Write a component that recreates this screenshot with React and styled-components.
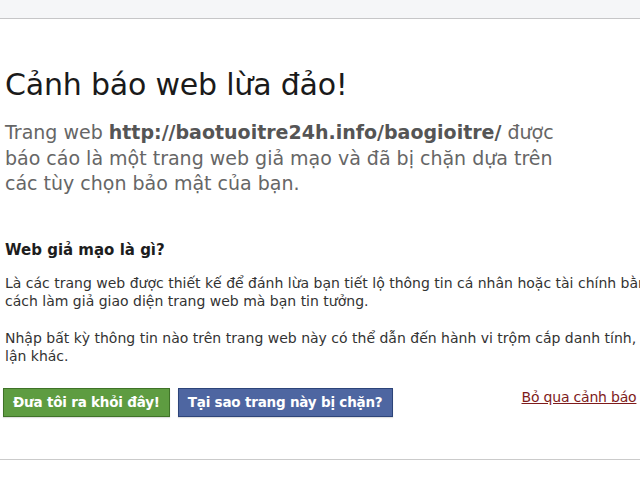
import React from 'react';
import styled, { createGlobalStyle } from 'styled-components';

const GlobalStyle = createGlobalStyle`
  html, body {
    margin: 0;
    padding: 0;
    background: #fff;
    overflow: hidden;
  }
  body {
    width: 640px;
    height: 480px;
    font-family: "DejaVu Sans", "Liberation Sans", sans-serif;
  }
`;

const Page = styled.div`
  width: 640px;
  height: 480px;
  overflow: hidden;
  display: flex;
  flex-flow: column nowrap;
`;

const TopBar = styled.div`
  height: 18px;
  flex-shrink: 0;
  background: #f5f6f8;
  border-bottom: 1px solid #c6c6c8;
`;

const Content = styled.div`
  width: 670px;
  flex-shrink: 0;
  padding: 48px 0 42px 5px;
  border-bottom: 1px solid #cbcbcb;
`;

const Title = styled.h1`
  margin: 0;
  font-weight: normal;
  font-size: 30px;
  line-height: 36px;
  color: #1a1a1a;
  letter-spacing: -0.2px;
`;

const Lead = styled.p`
  margin: 17px 0 0;
  width: 560px;
  font-size: 19px;
  line-height: 25.5px;
  color: #666;

  b {
    color: #555;
  }
`;

const Heading = styled.h2`
  margin: 43px 0 0;
  font-size: 15px;
  line-height: 20px;
  color: #1d1d1d;
`;

const Text = styled.p`
  margin: ${p => p.$first ? '14px' : '19px'} 0 0;
  font-size: 14px;
  line-height: 18px;
  color: #333;
`;

const Actions = styled.div`
  margin-top: 23px;
  display: flex;
  align-items: flex-start;
  gap: 8px;
  margin-left: -2px;
`;

const Button = styled.button`
  height: 29px;
  padding: 0 9px;
  border: 1px solid ${p => p.$border};
  background: ${p => p.$bg};
  color: #fff;
  font-family: "DejaVu Sans", "Liberation Sans", sans-serif;
  font-weight: bold;
  font-size: 13.5px;
  letter-spacing: -0.2px;
  box-shadow: 0 1px 1px rgba(0, 0, 0, 0.12);
  cursor: pointer;
`;

const SkipLink = styled.a`
  margin-left: 121px;
  margin-top: 1px;
  font-size: 14px;
  color: #7e1b1b;
  text-decoration: underline;
  white-space: nowrap;
  letter-spacing: -0.2px;
`;

const App = () => {
  return (
    <Page>
      <GlobalStyle />
      <TopBar />
      <Content>
        <Title>Cảnh báo web lừa đảo!</Title>
        <Lead>
          Trang web <b>http://baotuoitre24h.info/baogioitre/</b> được báo cáo là một trang web giả mạo và đã bị chặn dựa trên các tùy chọn bảo mật của bạn.
        </Lead>
        <Heading>Web giả mạo là gì?</Heading>
        <Text $first>
          Là các trang web được thiết kế để đánh lừa bạn tiết lộ thông tin cá nhân hoặc tài chính bằng cách làm giả giao diện trang web mà bạn tin tưởng.
        </Text>
        <Text>
          Nhập bất kỳ thông tin nào trên trang web này có thể dẫn đến hành vi trộm cắp danh tính, gian lận khác.
        </Text>
        <Actions>
          <Button $bg="#5e9c41" $border="#3f7228">Đưa tôi ra khỏi đây!</Button>
          <Button $bg="#4e66a1" $border="#2d4479">Tại sao trang này bị chặn?</Button>
          <SkipLink href="#">Bỏ qua cảnh báo</SkipLink>
        </Actions>
      </Content>
    </Page>
  );
};

export default App;
